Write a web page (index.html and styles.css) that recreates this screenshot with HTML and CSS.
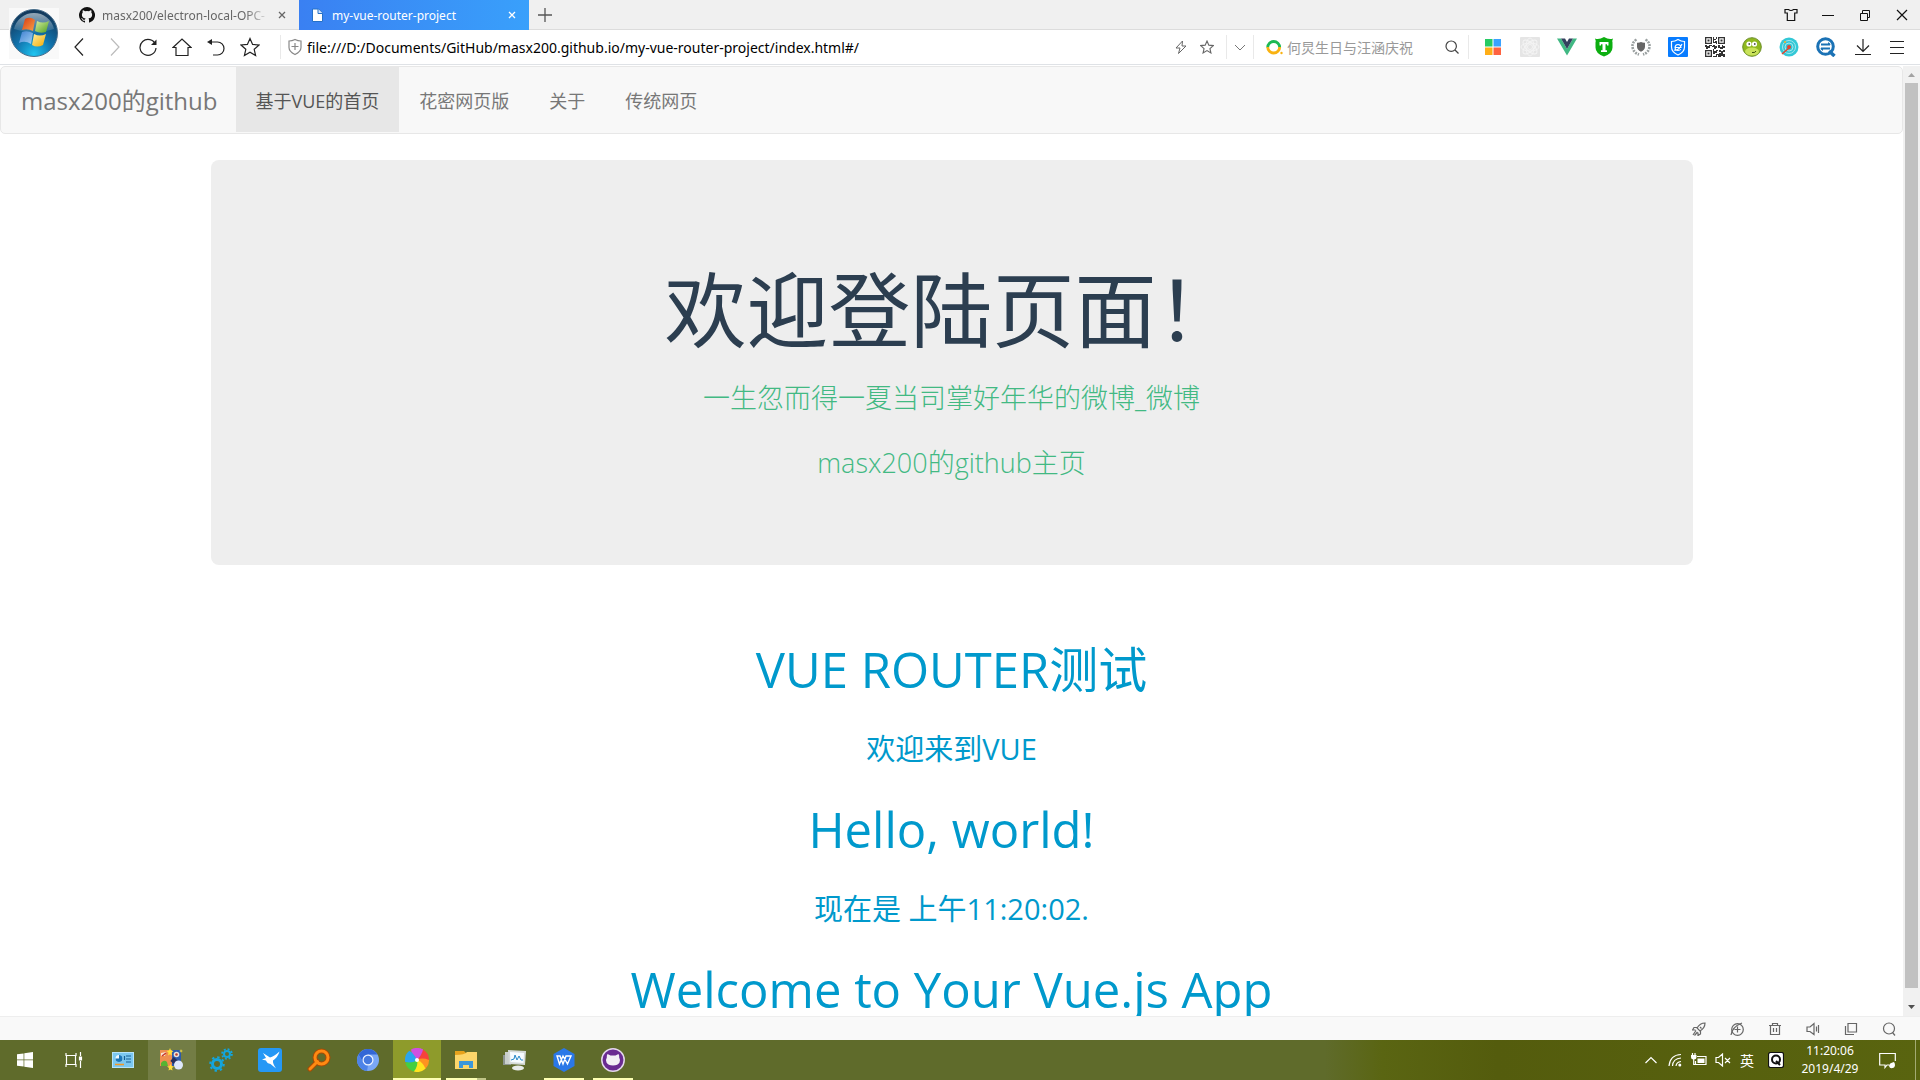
FILE: index.html
```html
<!DOCTYPE html>
<html lang="zh-CN">
<head>
<meta charset="utf-8">
<title>my-vue-router-project</title>
<link rel="stylesheet" href="styles.css">
</head>
<body>
<header class="chrome">
  <button class="orb" aria-label="浏览器菜单">
    <svg width="48" height="51" viewBox="0 0 48 51">
      <defs>
        <radialGradient id="orb" cx=".5" cy=".95" r=".9"><stop offset="0" stop-color="#1fc4f0"/><stop offset=".45" stop-color="#1173ad"/><stop offset="1" stop-color="#12395c"/></radialGradient>
        <linearGradient id="shine" x1="0" y1="0" x2="0" y2="1"><stop offset="0" stop-color="#fff" stop-opacity=".55"/><stop offset="1" stop-color="#fff" stop-opacity=".08"/></linearGradient>
        <linearGradient id="fr" x1="0" y1="0" x2="1" y2="1"><stop offset="0" stop-color="#d93a12"/><stop offset="1" stop-color="#f7a14a"/></linearGradient>
        <linearGradient id="fg" x1="0" y1="0" x2="1" y2="1"><stop offset="0" stop-color="#d8efa0"/><stop offset="1" stop-color="#4fa01f"/></linearGradient>
        <linearGradient id="fb" x1="0" y1="0" x2="1" y2="1"><stop offset="0" stop-color="#3f7fd0"/><stop offset="1" stop-color="#9fd0f5"/></linearGradient>
        <linearGradient id="fy" x1="0" y1="0" x2="1" y2="1"><stop offset="0" stop-color="#fff0a0"/><stop offset="1" stop-color="#f5a800"/></linearGradient>
      </defs>
      <circle cx="24" cy="25" r="23.500" fill="url(#orb)" stroke="#4a6f8c"/>
      <path d="M4 21a20.500 20.500 0 0 1 40 0q-20 7-40 0z" fill="url(#shine)"/>
      <path d="M15 11q5-3 10 1l-2 11q-6-3-11-1z" fill="url(#fr)"/>
      <path d="M27 13q6 3 12 0l-3 11q-6 2-11-1z" fill="url(#fg)"/>
      <path d="M12 24q5-2 11 1l-2 11q-6-4-12-1z" fill="url(#fb)"/>
      <path d="M24 26q6 3 12 0l-3 11q-6 3-11 0z" fill="url(#fy)"/>
    </svg>
  </button>

  <div class="tabbar">
    <div class="tab">
      <svg class="tab-icon" width="16" height="16" viewBox="0 0 16 16"><path fill="#111" d="M8 0a8 8 0 0 0-2.530 15.590c.4.070.55-.17.55-.380v-1.490c-2.230.480-2.700-.940-2.700-.940-.360-.920-.890-1.170-.890-1.170-.730-.500.050-.490.050-.490.810.060 1.230.830 1.230.830.720 1.230 1.880.870 2.340.670.070-.520.280-.870.510-1.070-1.780-.200-3.640-.890-3.640-3.950 0-.870.310-1.590.820-2.150-.080-.200-.360-1.020.080-2.120 0 0 .670-.220 2.200.820a7.600 7.600 0 0 1 4 0c1.530-1.040 2.200-.820 2.200-.820.440 1.100.160 1.920.080 2.120.510.560.820 1.270.820 2.150 0 3.070-1.870 3.750-3.650 3.950.290.250.54.730.54 1.480v2.190c0 .210.150.460.550.380A8 8 0 0 0 8 0z"/></svg>
      <span class="tab-title fade">masx200/electron-local-OPC-</span>
      <button class="tab-close" aria-label="关闭标签"><svg width="8" height="8" viewBox="0 0 8 8"><path d="M1 1l6 6M7 1l-6 6" stroke="currentColor" stroke-width="1.300"/></svg></button>
    </div>
    <div class="tab active">
      <svg class="tab-icon" width="16" height="16" viewBox="0 0 16 16"><path d="M3.500 2h6l4 4v8.500h-10z" fill="#fff" stroke="#2470c8"/><path d="M9 2v4.500h4.500" fill="#cfe3ff" stroke="#2470c8"/></svg>
      <span class="tab-title">my-vue-router-project</span>
      <button class="tab-close" aria-label="关闭标签"><svg width="8" height="8" viewBox="0 0 8 8"><path d="M1 1l6 6M7 1l-6 6" stroke="currentColor" stroke-width="1.300"/></svg></button>
    </div>
    <button class="new-tab" aria-label="新标签"><svg width="14" height="14" viewBox="0 0 14 14"><path d="M7 0v14M0 7h14" stroke="#555" stroke-width="1.300"/></svg></button>
    <div class="window-buttons">
      <button aria-label="皮肤"><svg width="14" height="14" viewBox="0 0 14 14" fill="none" stroke="#111" stroke-width="1.200"><path d="M1 1.500h3.500q2.500 2 5 0H13v3.500h-2.300v7.500H3.300V5H1z"/></svg></button>
      <button aria-label="最小化"><svg width="14" height="14" viewBox="0 0 14 14"><path d="M1 7.500h12" stroke="#111"/></svg></button>
      <button aria-label="还原"><svg width="14" height="14" viewBox="0 0 14 14" fill="none" stroke="#111"><path d="M2.500 5.500h7v7h-7zM4.500 5.500v-3h7v7h-2"/></svg></button>
      <button aria-label="关闭"><svg width="14" height="14" viewBox="0 0 14 14"><path d="M2 2l10 10M12 2L2 12" stroke="#111" stroke-width="1.200"/></svg></button>
    </div>
  </div>

  <div class="toolbar">
    <div class="nav-buttons">
      <button aria-label="后退"><svg width="20" height="20" viewBox="0 0 20 20"><path d="M13 1.500L5 10l8 8.500"/></svg></button>
      <button class="off" aria-label="前进"><svg width="20" height="20" viewBox="0 0 20 20"><path d="M7 1.500l8 8.500-8 8.500"/></svg></button>
      <button aria-label="刷新"><svg width="20" height="20" viewBox="0 0 20 20"><path d="M17.500 7.500a8 8 0 1 0 .500 3.500"/><path d="M18.500 2.500v5.500h-5.500z" fill="#222" stroke="none"/></svg></button>
      <button aria-label="主页"><svg width="20" height="20" viewBox="0 0 20 20"><path d="M1 10.500L10 2l9 8.500h-3V18.500H4V10.500z"/></svg></button>
      <button aria-label="恢复"><svg width="20" height="20" viewBox="0 0 20 20"><path d="M4 5h7.500a6.500 6.500 0 0 1 0 13H7"/><path d="M1 5l5-3v6z" fill="#222" stroke="none"/></svg></button>
      <button aria-label="收藏"><svg width="20" height="20" viewBox="0 0 20 20"><path d="M10 1.500l2.600 5.900 6.400.600-4.800 4.300 1.400 6.200L10 15.200l-5.600 3.300 1.400-6.200L1 8l6.400-.600z"/></svg></button>
    </div>
    <form class="address">
      <svg width="16" height="18" viewBox="0 0 16 18" fill="none" stroke="#888" stroke-width="1.200"><path d="M8 1.500q3 1.500 6 1.500v6.500q0 4-6 7-6-3-6-7V3q3 0 6-1.500zM8 5v7M4.500 8.500h7"/></svg>
      <input class="url" type="text" aria-label="地址" value="file:///D:/Documents/GitHub/masx200.github.io/my-vue-router-project/index.html#/">
      <button type="button" aria-label="极速模式"><svg width="14" height="14" viewBox="0 0 14 14" fill="none" stroke="#666"><path d="M8.500 1L2 8h4l-1.500 5.500L12 6H8z"/></svg></button>
      <button type="button" aria-label="收藏网址"><svg width="14" height="14" viewBox="0 0 20 20" fill="none" stroke="#666" stroke-width="1.600"><path d="M10 1.500l2.600 5.900 6.400.600-4.800 4.300 1.400 6.200L10 15.200l-5.600 3.300 1.400-6.200L1 8l6.400-.600z"/></svg></button>
    </form>
    <button class="drop" aria-label="展开"><svg width="12" height="12" viewBox="0 0 12 12" fill="none" stroke="#777"><path d="M1 4l5 5 5-5"/></svg></button>
    <form class="search">
      <svg width="17" height="16" viewBox="0 0 17 16" fill="none" stroke-width="2.800"><path d="M1.700 8.500a6 6 0 0 1 12 0" stroke="#1db954"/><path d="M13.700 8a6 6 0 0 1-12 0" stroke="#f9b211"/><circle cx="15.500" cy="14" r="1.200" fill="#f9b211" stroke="none"/></svg>
      <input type="text" aria-label="搜索" placeholder="何炅生日与汪涵庆祝">
      <button type="button" aria-label="搜索"><svg width="14" height="14" viewBox="0 0 14 14" fill="none" stroke="#444" stroke-width="1.200"><circle cx="6.200" cy="6.200" r="5.200"/><path d="M10 10l3.500 3.500"/></svg></button>
    </form>
    <div class="extensions">
      <button aria-label="应用"><svg width="16" height="16" viewBox="0 0 16 16"><path d="M0 0h7.500v7.500H0z" fill="#26cb64"/><path d="M8.500 0H16v7.500H8.500z" fill="#3aa2ff"/><path d="M0 8.500h7.500V16H0z" fill="#ffae17"/><path d="M8.500 8.500H16V16H8.500z" fill="#ff6240"/></svg></button>
      <button aria-label="React"><svg width="20" height="20" viewBox="0 0 20 20"><rect width="20" height="20" rx="1" fill="#e5e5e5"/><g fill="none" stroke="#f4f4f4"><circle cx="10" cy="10" r="2.500"/><ellipse cx="10" cy="10" rx="9" ry="4"/><ellipse cx="10" cy="10" rx="9" ry="4" transform="rotate(45 10 10)"/><ellipse cx="10" cy="10" rx="9" ry="4" transform="rotate(90 10 10)"/><ellipse cx="10" cy="10" rx="9" ry="4" transform="rotate(135 10 10)"/></g></svg></button>
      <button aria-label="Vue"><svg width="20" height="20" viewBox="0 0 20 20"><path d="M0 1.500h4L10 12l6-10.500h4L10 18.500z" fill="#41b883"/><path d="M4 1.500h4L10 5l2-3.500h4L10 12z" fill="#34405e"/></svg></button>
      <button aria-label="T"><svg width="20" height="20" viewBox="0 0 20 20"><path d="M10 0q5 3 9 1.500-1 2-.500 4v5q0 6-8.500 9-8.500-3-8.500-9v-5q.500-2-.500-4Q5 3 10 0z" fill="#0cae10"/><path d="M5.500 5h9v3.500H13V7.200h-1.500v6h1.500V15H7v-1.800h1.500v-6H7v1.300H5.500z" fill="#fff"/></svg></button>
      <button aria-label="徽章"><svg width="20" height="20" viewBox="0 0 20 20"><path d="M10 5q2 1 4 .700v4q0 3-4 5-4-2-4-5v-4q2 .300 4-.700z" fill="#666"/><path d="M5.500 2.500Q0 6 2 12q1.500 4 6 5.500M14.500 2.500Q20 6 18 12q-1.500 4-6 5.500" fill="none" stroke="#9aa0a0" stroke-width="2.600" stroke-dasharray="2 1"/></svg></button>
      <button aria-label="卫士"><svg width="20" height="20" viewBox="0 0 20 20"><rect width="20" height="20" rx="1" fill="#087cff"/><path d="M10 2.500q3 2 6.500 2v5.500q0 5-6.500 8-6.500-3-6.500-8V4.500q3.500 0 6.500-2z" fill="none" stroke="#fff" stroke-width="1.200"/><path d="M7 10.500h6q-.300-3-3-3t-3 3q.300 3 3 3 2 0 2.800-1.200M6 13q5 1 8-6" fill="none" stroke="#fff" stroke-width="1.100"/></svg></button>
      <button aria-label="二维码"><svg width="20" height="20" viewBox="0 0 20 20" fill="#333"><path fill-rule="evenodd" d="M0 0h7v7H0zM1.300 1.300v4.400h4.400V1.300zM13 0h7v7h-7zM14.300 1.300v4.400h4.400V1.300zM0 13h7v7H0zM1.300 14.300v4.400h4.400v-4.400z"/><path d="M2.500 2.500h2v2h-2zM15.500 2.500h2v2h-2zM2.500 15.500h2v2h-2zM8 0h1v2h2v1H9v2H8zM11 0h1v2h-1zM10 4h2v3h-1V6H8V5h2zM0 8h2v1h2V8h3v1H5v2H3v1H1v-2H0zM8 8h2v1h2v2h-1v1H9v-2H7V9h1zM13 8h2v2h2V8h1v1h2v2h-2v1h-3v-1h-2zM8 12h1v2h2v-1h2v1h-1v2h-2v1H8v-2zM14 13h2v1h2v-1h2v2h-2v2h2v3h-2v-1h-2v1h-3v-2h-1v2H8v-1h3v-2h3v-1h2v-1h-2z"/></svg></button>
      <button aria-label="笑脸"><svg width="20" height="20" viewBox="0 0 20 20"><circle cx="10" cy="10" r="9.300" fill="#8fb81f" stroke="#6c8d2a"/><ellipse cx="10" cy="14.500" rx="7" ry="4" fill="#c9e25a"/><circle cx="7" cy="7" r="2.600" fill="#fff"/><circle cx="12.500" cy="7" r="2.600" fill="#fff"/><path d="M6.500 7h1.500M12 7h1.500" stroke="#333" stroke-width="1.500"/><path d="M10 15.500q3.500.500 4-1.500" fill="none" stroke="#38500a"/></svg></button>
      <button aria-label="测速"><svg width="20" height="20" viewBox="0 0 20 20"><circle cx="10" cy="10" r="9.500" fill="#33c8d6"/><g fill="none" stroke="#a6e7ee"><circle cx="10" cy="10" r="6.500"/><circle cx="10" cy="10" r="4"/></g><path d="M3 17l7-6" stroke="#e5432e" stroke-width="1.600"/><circle cx="10" cy="10" r="2" fill="#e5432e"/><circle cx="6" cy="5" r="1" fill="#f6a821"/></svg></button>
      <button aria-label="切换搜索"><svg width="20" height="20" viewBox="0 0 20 20"><circle cx="9.500" cy="9.500" r="7.800" fill="none" stroke="#1b72b5" stroke-width="3"/><path d="M13 14l5.500 5" stroke="#1b72b5" stroke-width="3.500"/><path d="M5 7.500h9M5 11.500h9" stroke="#1b72b5" stroke-width="1.800"/><path d="M12 5l3 2.500h-3zM7 14l-3-2.500h3z" fill="#1b72b5"/></svg></button>
      <button aria-label="下载"><svg width="16" height="18" viewBox="0 0 16 18" fill="none" stroke="#222" stroke-width="1.200"><path d="M8 1v12M2 7.500L8 13.500l6-6M0 16.500h16"/></svg></button>
      <button class="menu" aria-label="菜单"><svg width="14" height="14" viewBox="0 0 14 14" stroke="#222"><path d="M0 1.500h14M0 7.500h14M0 13.500h14"/></svg></button>
    </div>
  </div>
</header>

<div class="viewport">
  <div class="page">
    <nav class="navbar">
      <a class="brand" href="#/">masx200的github</a>
      <a class="nav-link current" href="#/">基于VUE的首页</a>
      <a class="nav-link" href="#/flower">花密网页版</a>
      <a class="nav-link" href="#/about">关于</a>
      <a class="nav-link" href="#/classic">传统网页</a>
    </nav>
    <section class="jumbotron">
      <h1>欢迎登陆页面！</h1>
      <p><a href="#weibo">一生忽而得一夏当司掌好年华的微博_微博</a></p>
      <p><a href="#github">masx200的github主页</a></p>
    </section>
    <section class="intro">
      <h1>VUE ROUTER测试</h1>
      <h3>欢迎来到VUE</h3>
      <h1>Hello, world!</h1>
      <h3>现在是 上午11:20:02.</h3>
      <h1>Welcome to Your Vue.js App</h1>
    </section>
  </div>
  <div class="scrollbar">
    <svg width="17" height="17" viewBox="0 0 17 17"><path d="M5 11l3.500-4 3.500 4z" fill="#a3a3a3"/></svg>
    <div class="thumb"></div>
    <svg width="17" height="17" viewBox="0 0 17 17"><path d="M5 6l3.500 4L12 6z" fill="#505050"/></svg>
  </div>
</div>

<div class="statusbar">
  <button aria-label="加速"><svg width="14" height="14" viewBox="0 0 14 14"><path d="M13 1q-5 0-8 5l3 3q5-3 5-8zM5.500 5.500H2L.500 8l3 0M8.500 8.500V12L6 13.500v-3M4 8.500L1 13M5.500 10l-3 3.500M8 5l1.500 1.500"/></svg></button>
  <button aria-label="浏览模式"><svg width="14" height="14" viewBox="0 0 14 14"><circle cx="7.500" cy="7.500" r="5.800"/><path d="M7.500 4.500v6M4.500 7.500h6M1 13Q2 5 12 1"/></svg></button>
  <button aria-label="清理"><svg width="14" height="14" viewBox="0 0 14 14"><path d="M1 3.500h12M4.500 3V1.500h5V3M2.500 3.500v9h9v-9M5.500 6v4M8.500 6v4"/></svg></button>
  <button aria-label="声音"><svg width="14" height="14" viewBox="0 0 14 14"><path d="M1 5h3l4-3.500v11L4 9.500H1zM10.500 4.500v5M12.500 3v8"/></svg></button>
  <button aria-label="窗口"><svg width="14" height="14" viewBox="0 0 14 14"><path d="M4 1.500h8.500v8.500H4zM1.500 4v8.500H10"/></svg></button>
  <button aria-label="缩放"><svg width="14" height="14" viewBox="0 0 14 14"><circle cx="7" cy="6.500" r="5.500"/><path d="M10.500 10.500l2.500 3"/></svg></button>
</div>

<footer class="taskbar">
  <div class="apps">
    <button aria-label="开始"><svg width="16" height="16" viewBox="0 0 16 16" fill="#fff"><path d="M0 2.300l6.600-.900v6.200H0zM7.300 1.300L16 0v7.600H7.300zM0 8.300h6.600v6.300L0 13.700zM7.300 8.300H16V16l-8.700-1.300z"/></svg></button>
    <button aria-label="任务视图"><svg width="18" height="16" viewBox="0 0 18 16" fill="none" stroke="#fff" stroke-width="1.200"><path d="M1 1v2.500h10V1M1 15v-2.500h10V15M1.500 3.500v9M10.500 3.500v9M15.500 0v4M15.500 9v7"/><path d="M14.500 5h2v3h-2z" fill="#fff"/></svg></button>
    <button aria-label="控制面板"><svg width="22" height="18" viewBox="0 0 22 18"><rect x=".500" y="1.500" width="21" height="15" fill="#7bc8f0" stroke="#b6e4fb"/><circle cx="7" cy="7.500" r="3.500" fill="#f0f8ff"/><path d="M7 7.500V4a3.500 3.500 0 1 1-3.500 3.500z" fill="#1a76b8"/><path d="M14 5h5M14 8h5M14 11h5M12.500 5v4" stroke="#175f94" stroke-width="1.200"/><path d="M3 13.500h9" stroke="#f49a25" stroke-width="1.500"/></svg></button>
    <button class="soft" aria-label="图像工具"><svg width="24" height="24" viewBox="0 0 24 24"><path d="M0 2h21v16H0z" fill="#2d5bab"/><path d="M0 2h12v16H0z" fill="#ef8f50"/><path d="M1 5l5-1-1 4-4 0z" fill="#f6e2d3"/><path d="M2 8l4-3" stroke="#c8372b" stroke-width="1.500"/><path d="M1 15q3-4 6-1l1 4H1z" fill="#57b432"/><circle cx="16.500" cy="6.500" r="2.800" fill="#e8e2da"/><circle cx="16.500" cy="6.500" r="1.300" fill="#bf3c2c"/><path d="M12 11l7 6" stroke="#27305e" stroke-width="5"/><circle cx="18.500" cy="17" r="4.500" fill="#dfe8fb"/><path d="M10 0l1 2.500 2.500.500-2 1.800.500 2.700-2-1.300-2 1.300.500-2.700-2-1.800L9 2.500zM10.500 16l1 2 2.500.500-2 1.500.500 2.500-2-1-2 1 .500-2.500L7 18.500l2.500-.500zM21 1l.500 1.500 1.500.500-1.500.500L21 5l-.500-1.500L19 3l1.500-.500z" fill="#ffe03b"/></svg></button>
    <button aria-label="设置工具"><svg width="24" height="24" viewBox="0 0 24 24" fill="none" stroke="#14a5dc"><circle cx="8" cy="16" r="4.500" stroke-width="3"/><circle cx="8" cy="16" r="6.800" stroke-width="2" stroke-dasharray="2.400 2.940"/><circle cx="18" cy="6" r="3" stroke-width="2"/><circle cx="18" cy="6" r="4.800" stroke-width="2" stroke-dasharray="1.900 1.870"/></svg></button>
    <button aria-label="飞鸟"><svg width="24" height="24" viewBox="0 0 24 24"><rect width="24" height="24" rx="3" fill="#2598f5"/><path d="M5 5l7 4.500Q16 8.500 21.500 3.500 20 9 15 12.500q-.500 3 3 8L12.500 16Q9 15.500 8 12.500L4 11.500l4-1.500z" fill="#fff"/></svg></button>
    <button aria-label="搜索工具"><svg width="24" height="24" viewBox="0 0 24 24" fill="none"><path d="M10.500 13.500L3 21" stroke="#a94a04" stroke-width="5" stroke-linecap="round"/><circle cx="14.500" cy="9.500" r="6.500" stroke="#a94a04" stroke-width="5"/><path d="M10.500 13.500L3 21" stroke="#ff8a12" stroke-width="3" stroke-linecap="round"/><circle cx="14.500" cy="9.500" r="6.500" stroke="#ff8a12" stroke-width="3"/></svg></button>
    <button aria-label="Chromium"><svg width="22" height="22" viewBox="0 0 22 22"><circle cx="11" cy="11" r="11" fill="#7aa7f5"/><path d="M1.500 5.500A11 11 0 0 1 20.500 5.500H11L6.300 13.700z" fill="#3367d6"/><path d="M1.500 5.500L6.300 13.700Q8 16 11 16.500L10 22A11 11 0 0 1 1.500 5.500z" fill="#4d83e8"/><circle cx="11" cy="11" r="5.500" fill="#eef4ff"/><circle cx="11" cy="11" r="4.300" fill="#4579df"/></svg></button>
    <button class="lit" aria-label="极速浏览器"><svg width="24" height="24" viewBox="-12 -12 24 24">
      <path d="M0 0Q-5-3-6-10.400A12 12 0 0 1 6-10.400Q5-5 0 0z" fill="#d050e0"/>
      <path d="M0 0Q-5-3-6-10.400A12 12 0 0 1 6-10.400Q5-5 0 0z" fill="#f8423c" transform="rotate(60)"/>
      <path d="M0 0Q-5-3-6-10.400A12 12 0 0 1 6-10.400Q5-5 0 0z" fill="#ff9320" transform="rotate(120)"/>
      <path d="M0 0Q-5-3-6-10.400A12 12 0 0 1 6-10.400Q5-5 0 0z" fill="#ffe51f" transform="rotate(165)"/>
      <path d="M0 0Q-5-3-6-10.400A12 12 0 0 1 6-10.400Q5-5 0 0z" fill="#45cf3f" transform="rotate(225)"/>
      <path d="M0 0Q-5-3-6-10.400A12 12 0 0 1 6-10.400Q5-5 0 0z" fill="#2aa5ee" transform="rotate(290)"/>
      <path d="M0 0Q-2-7 3-11.600A12 12 0 0 1 6-10.400Q5-5 0 0z" fill="#d050e0"/>
      <circle r="2" fill="#fff"/></svg></button>
    <button class="open stacked" aria-label="文件资源管理器"><svg width="22" height="20" viewBox="0 0 22 20"><path d="M0 1h9l2 2h11v16H0z" fill="#e6a21c"/><path d="M0 5q10 0 12-3h10v17H0z" fill="#fbd66b"/><path d="M4 18v-7h14v7h-4v-3H8v3z" fill="#3c97da"/></svg></button>
    <button aria-label="监视器"><svg width="24" height="22" viewBox="0 0 24 22"><path d="M0 6h8v10H0z" fill="#8d9590"/><path d="M2 3h8v12H2z" fill="#c9cfcc"/><path d="M5 1l18 1-1 14-16-1z" fill="#d5dad8"/><path d="M7 3l14 1-.500 10-13-1z" fill="#f7fcff"/><path d="M8 11l3-1 1-4 2 5 2-4 2 4h2" fill="none" stroke="#2688c8"/><ellipse cx="15" cy="19" rx="6" ry="2.500" fill="#e8ebe9"/></svg></button>
    <button class="open" aria-label="WPS"><svg width="22" height="24" viewBox="0 0 22 24"><path d="M11 0l10.500 6v12L11 24 .500 18V6z" fill="#2a78e8"/><path d="M4 8h3l3 8 3-8h5l-3.500 8L10 8 6.500 16z" fill="none" stroke="#fff" stroke-width="1.400"/></svg></button>
    <button class="open" aria-label="GitHub Desktop"><svg width="24" height="24" viewBox="0 0 24 24"><circle cx="12" cy="12" r="11.200" fill="#6a2b91" stroke="#e4d8ec" stroke-width="1.500"/><path d="M6.500 6l3 1.500h5l3-1.500q1 1.500.700 3.500 1.300 2 .300 5-1.500 3-6.500 3t-6.500-3q-1-3 .300-5-.300-2 .700-3.500z" fill="#f3f0f5"/></svg></button>
  </div>
  <div class="tray">
    <button aria-label="隐藏的图标"><svg width="14" height="14" viewBox="0 0 14 14"><path d="M1.500 10L7 4.500 12.500 10"/></svg></button>
    <button aria-label="无线网络"><svg width="14" height="14" viewBox="0 0 14 14"><path d="M1 13Q2 2 13 1.500M4.500 13Q5 5.500 13 5M8 13Q8.500 9 13 8.500"/><circle cx="11.800" cy="12" r="1.500" fill="#fff" stroke="none"/></svg></button>
    <button aria-label="电池"><svg width="16" height="14" viewBox="0 0 16 14"><path d="M6 3.500h9v8H4.500V8M1.500 0v2M4 0v2M2.700 6v5.500h2"/><path d="M0 2h5.500v2q0 2.500-2.700 2.500T0 4zM6.500 5.500h7v4.500h-7z" fill="#fff" stroke="none"/></svg></button>
    <button aria-label="静音"><svg width="16" height="14" viewBox="0 0 16 14"><path d="M1 4.500h2.500L7.500 1v12L3.500 9.500H1zM10 5l5 5M15 5l-5 5"/></svg></button>
    <button class="ime" aria-label="输入法">英</button>
    <button class="wide" aria-label="QQ拼音"><svg width="16" height="16" viewBox="0 0 16 16"><rect x=".500" y=".500" width="15" height="15" rx="2" fill="#fff" stroke="#111"/><circle cx="8" cy="7.500" r="4" fill="none" stroke="#111" stroke-width="2"/><path d="M8 9l4 4" stroke="#111" stroke-width="2"/></svg></button>
    <button class="clock"><span>11:20:06</span><span>2019/4/29</span></button>
    <button class="notice" aria-label="通知"><svg width="17" height="17" viewBox="0 0 17 17"><path d="M10 13H8l-2 2.500V13H.700V1.500h15.600V9" /><path d="M10 14q0-3 5-4 2 3 0 5.500-4 2-5-1.500z" fill="#fff" stroke="none"/></svg></button>
  </div>
</footer>
</body>
</html>
```
FILE: styles.css
```css
* { box-sizing: border-box; }

body {
  margin: 0;
  height: 100vh;
  display: flex;
  flex-direction: column;
  overflow: hidden;
  background: #fff;
  font-family: "Open Sans", "Noto Sans CJK SC", sans-serif;
  color: #2c3e50;
}

button {
  border: 0;
  padding: 0;
  background: none;
  font: inherit;
  color: inherit;
  display: flex;
  align-items: center;
  justify-content: center;
}

input {
  border: 0;
  padding: 0;
  min-width: 0;
  background: none;
  font: inherit;
  outline: 0;
}

a { text-decoration: none; }
svg { display: block; flex: none; }

/* Browser chrome */
.chrome {
  position: relative;
  flex: none;
  border-bottom: 1px solid #dfe2e6;
  font-family: "Noto Sans", "Noto Sans CJK SC", sans-serif;
}

.orb {
  position: absolute;
  left: 9px;
  top: 8px;
  width: 50px;
  height: 51px;
  background: #f9f9f9;
}

.tabbar {
  height: 30px;
  padding-left: 69px;
  display: flex;
  background: #f0f0f0;
  border-bottom: 1px solid #dcdcdc;
}

.tab {
  width: 230px;
  height: 30px;
  padding: 0 12px 0 10px;
  display: flex;
  align-items: center;
  gap: 7px;
  font-size: 12px;
  color: #666;
}

.tab.active {
  background: linear-gradient(90deg, #3a80f2, #39a0fb);
  color: #fff;
}

.tab-title { flex: 1; white-space: nowrap; overflow: hidden; }
.tab-title.fade { -webkit-mask-image: linear-gradient(90deg, #000 85%, transparent); mask-image: linear-gradient(90deg, #000 85%, transparent); }
.tab-close { width: 10px; height: 16px; }
.new-tab { width: 32px; height: 30px; }
.window-buttons { margin-left: auto; display: flex; }
.window-buttons button { width: 37px; height: 30px; }

.toolbar {
  height: 34px;
  padding: 0 8px 0 63px;
  display: flex;
  align-items: center;
  background: #fff;
}

.nav-buttons { display: flex; margin-right: 13px; }
.nav-buttons button { width: 34px; height: 34px; }
.nav-buttons svg { width: 20px; fill: none; stroke: #222; stroke-width: 1.200; }
.nav-buttons .off svg { stroke: #bbb; }

.address {
  flex: 1;
  height: 24px;
  padding: 0 8px 0 6px;
  display: flex;
  align-items: center;
  gap: 4px;
  border-left: 1px solid #e9e9e9;
  border-right: 1px solid #e9e9e9;
}

.address .url { flex: 1; font-size: 14px; color: #000; }
.address button { width: 22px; height: 24px; }
.drop { width: 26px; height: 24px; }

.search {
  width: 216px;
  height: 24px;
  padding-left: 12px;
  display: flex;
  align-items: center;
  gap: 4px;
  border-left: 1px solid #e9e9e9;
  border-right: 1px solid #e9e9e9;
}

.search input { flex: 1; font-size: 14px; }
.search input::placeholder { color: #999; }
.search button { width: 32px; height: 24px; }

.extensions { margin-left: 5px; display: flex; }
.extensions button { width: 37px; height: 34px; }
.extensions .menu { width: 31px; }

/* Page */
.viewport { flex: 1; min-height: 0; display: flex; padding-top: 1px; overflow: hidden; }
.page { flex: 1; overflow: hidden; text-align: center; }

.navbar {
  height: 68px;
  display: flex;
  align-items: stretch;
  background: #f8f8f8;
  border: 1px solid #e7e7e7;
  border-radius: 5px;
  padding-bottom: 1px;
}

.brand, .nav-link { display: flex; align-items: center; color: #777; }
.brand { padding: 0 18px 0 20px; font-size: 24px; }
.nav-link { padding: 0 20px; font-size: 18px; }
.nav-link.current { background: #e7e7e7; color: #555; }

.jumbotron {
  width: 1482px;
  max-width: 90%;
  margin: 26px auto 0;
  padding: 104px 40px 83px;
  background: #eee;
  border-radius: 8px;
}

.jumbotron h1 { margin: 0 0 25px; font-size: 82px; line-height: 90px; font-weight: 400; }
.jumbotron p { margin: 0 0 27px; font-size: 27px; line-height: 38px; font-weight: 300; }
.jumbotron p:last-child { margin-bottom: 0; }
.jumbotron a { color: #42b983; }

.intro { padding-top: 77px; color: #09c; }
.intro h1, .intro h3 { margin: 0 0 35px; font-weight: 400; }
.intro h1 { font-size: 49px; line-height: 54px; }
.intro h3 { font-size: 29px; line-height: 36px; }

.scrollbar { width: 17px; display: flex; flex-direction: column; background: #f1f1f1; }
.thumb { flex: 1; margin: 0 2px 11px; background: #c1c1c1; }

.statusbar {
  height: 24px;
  flex: none;
  padding-right: 12px;
  display: flex;
  justify-content: flex-end;
  background: #f9f9f9;
  border-top: 1px solid #eee;
}

.statusbar button { width: 38px; height: 24px; }
.statusbar svg { fill: none; stroke: #666; stroke-width: 1.200; }

/* Taskbar */
.taskbar {
  height: 40px;
  flex: none;
  padding-right: 4px;
  display: flex;
  justify-content: space-between;
  background: linear-gradient(90deg, #5f6b2b 0, #5f6b2b 69%, #5a6512 72%, #545c0d 78%, #59640f 100%);
  color: #fff;
}

.apps { display: flex; gap: 1px; padding-left: 1px; }
.apps button { position: relative; width: 48px; height: 40px; }
.apps .soft { background: #737d45; }
.apps .lit { background: #8e9b2b; box-shadow: inset 0 -2px #fdffb4; }

.apps .open::after {
  content: "";
  position: absolute;
  left: 4px;
  right: 4px;
  bottom: 0;
  height: 2px;
  background: #fdffb4;
}

.apps .stacked::after { background: linear-gradient(90deg, #fdffb4 78%, #bfc487 78%); }

.tray {
  display: flex;
  align-items: center;
  padding-right: 8px;
  border-right: 1px solid #a3aa72;
}

.tray button { width: 24px; height: 40px; }
.tray svg { fill: none; stroke: #fff; stroke-width: 1.200; }
.tray .ime { font-size: 14px; }
.tray .wide { width: 34px; }
.tray .clock { width: 74px; flex-direction: column; font-family: "Noto Sans", sans-serif; font-size: 12px; line-height: 18px; }
.tray .notice { width: 40px; }
```
